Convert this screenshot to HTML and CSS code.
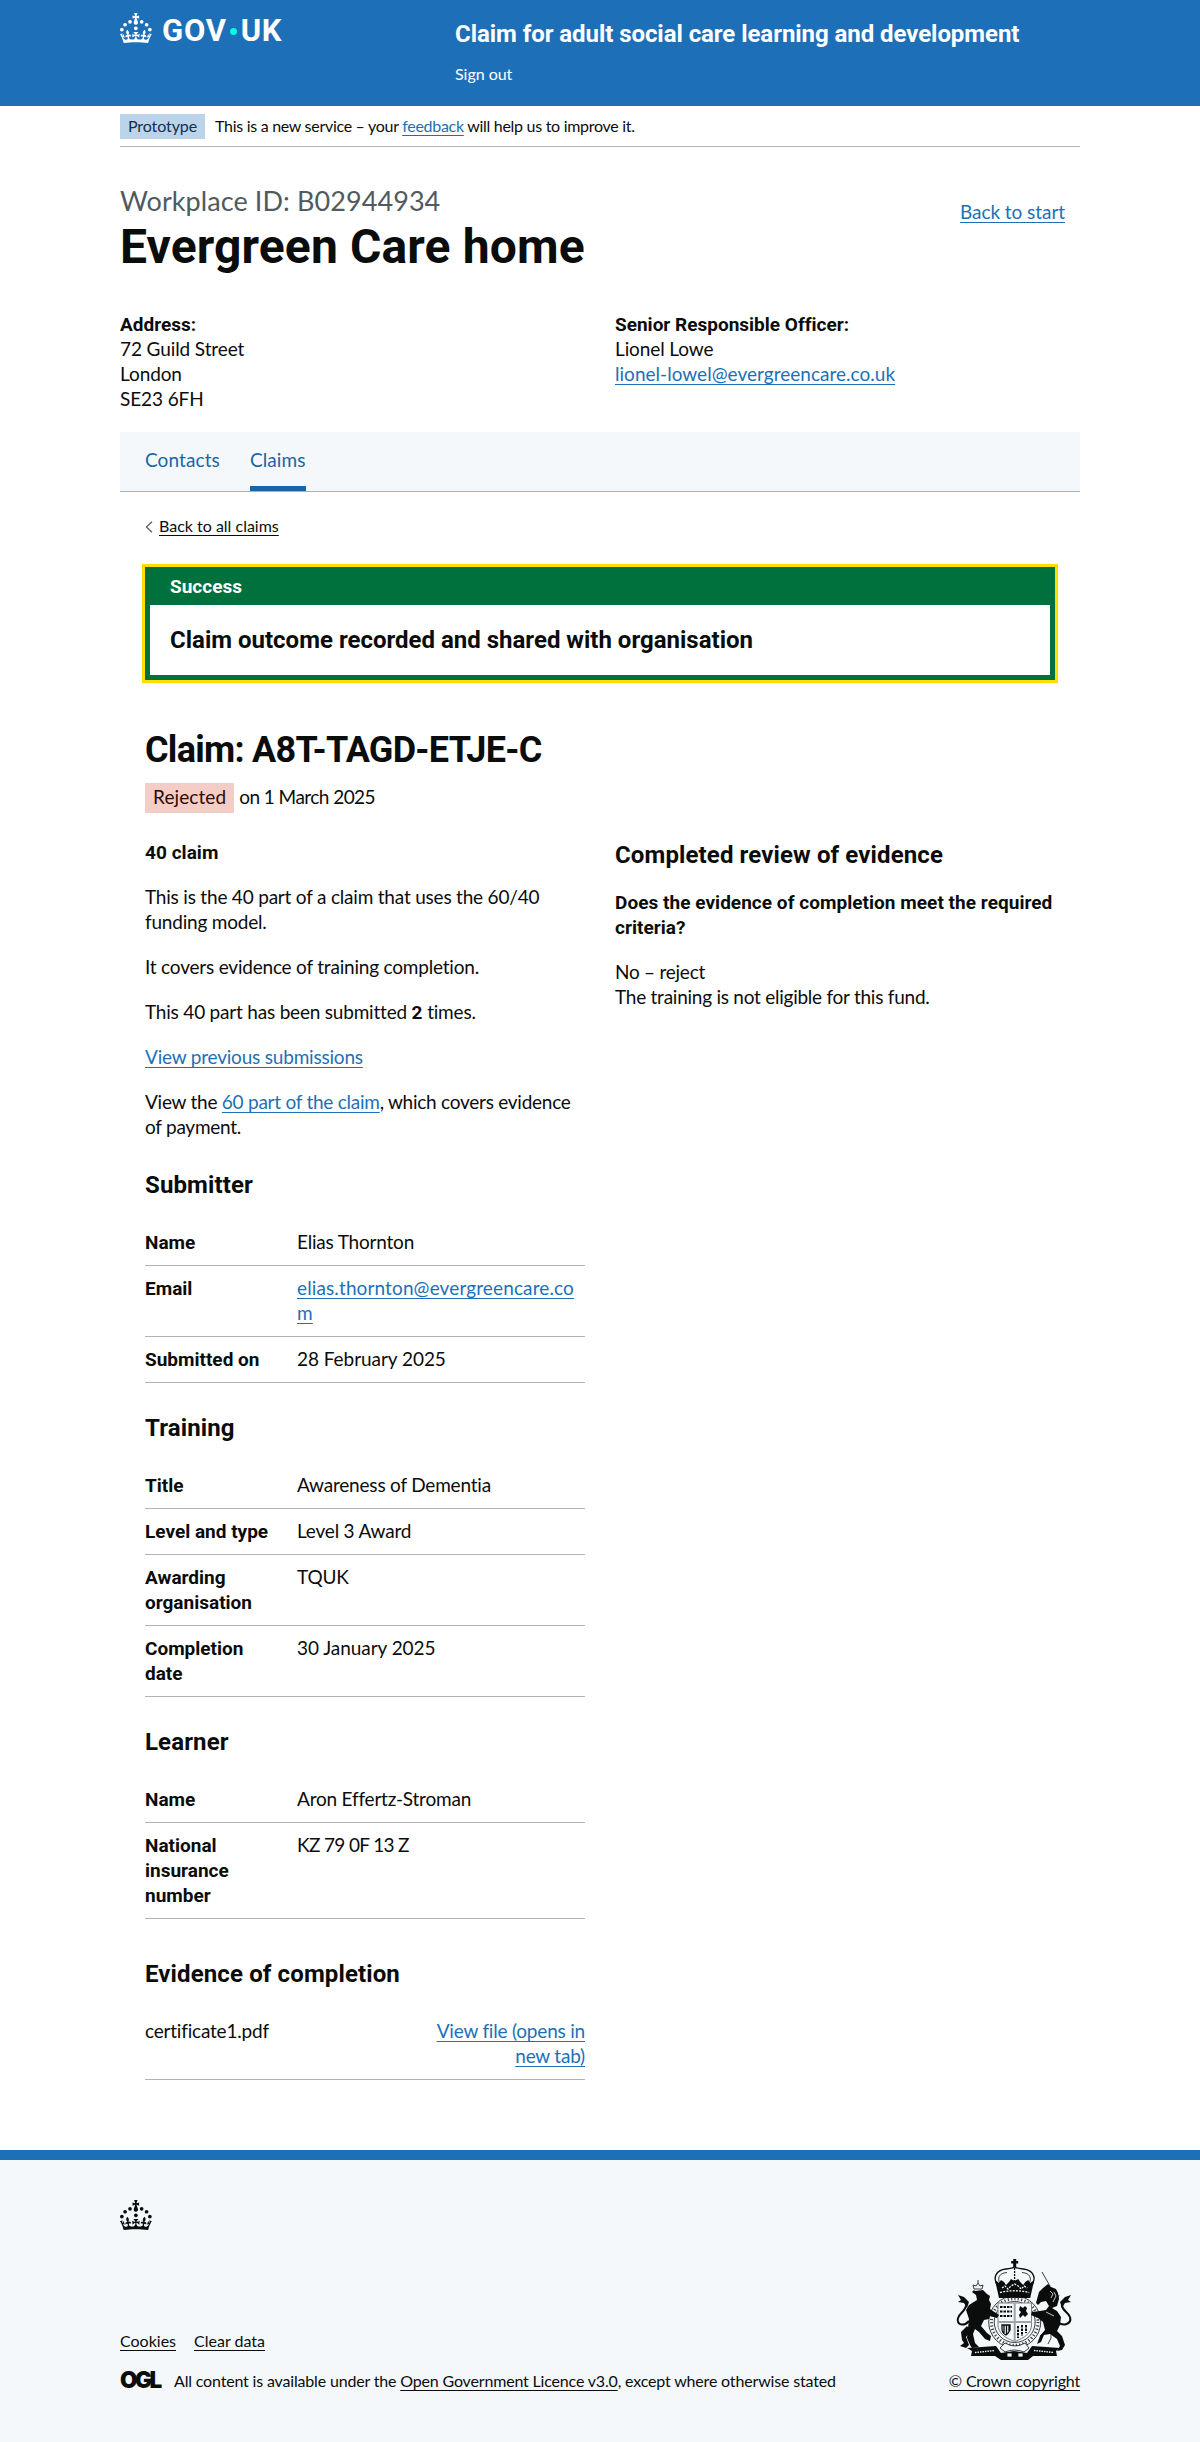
FILE: index.html
```
<!DOCTYPE html>
<html lang="en">
<head>
  <meta charset="utf-8">
  <title>Claim for adult social care learning and development</title>
  <link rel="stylesheet" href="styles.css">
</head>
<body>
  <svg class="sprite" aria-hidden="true">
    <symbol id="crown" viewBox="0 0 64 60">
      <circle cx="20" cy="17.6" r="3.7"/><circle cx="10.2" cy="23.5" r="3.7"/><circle cx="3.7" cy="33.2" r="3.7"/><circle cx="31.7" cy="30.6" r="3.7"/><circle cx="43.3" cy="17.6" r="3.7"/><circle cx="53.2" cy="23.5" r="3.7"/><circle cx="59.7" cy="33.2" r="3.7"/>
      <path d="M33.1,9.8c.2-.1.3-.3.5-.5l4.6,2.4v-6.8l-4.6,1.5c-.1-.2-.3-.3-.5-.5l1.9-5.9h-6.7l1.9,5.9c-.2.1-.3.3-.5.5l-4.6-1.5v6.8l4.6-2.4c.1.2.3.3.5.5l-2.6,8c-.9,2.8,1.2,5.7,4.1,5.7h0c3,0,5.1-2.9,4.1-5.7l-2.6-8ZM37,37.9s-3.4,3.8-4.1,6.1c2.2,0,4.2-.5,6.4-2.8l-.7,8.5c-2-2.8-4.4-4.1-5.7-3.8.1,3.1.5,6.7,5.8,7.2,3.7.3,6.7-1.5,7-3.8.4-2.6-2-4.3-3.7-1.6-1.4-4.5,2.4-6.1,4.9-3.2-1.9-4.5-1.8-7.7,2.4-10.9,3,4,2.6,7.3-1.2,11.1,2.4-1.3,6.2,0,4,4.6-1.2-2.8-3.7-2.2-4.2.2-.3,1.7.7,3.7,3,4.2,1.9.3,4.7-.9,7-5.9-1.3,0-2.4.7-3.9,1.7l2.4-8c.6,2.3,1.4,3.7,2.2,4.5.6-1.6.5-2.8,0-5.3l5,1.8c-2.6,3.6-5.2,8.7-7.3,17.5-7.4-1.1-15.7-1.7-24.5-1.7h0c-8.8,0-17.1.6-24.5,1.7-2.1-8.9-4.7-13.9-7.3-17.5l5-1.8c-.5,2.5-.6,3.7,0,5.3.8-.8,1.6-2.3,2.2-4.5l2.4,8c-1.5-1-2.6-1.7-3.9-1.7,2.3,5,5.2,6.2,7,5.9,2.3-.4,3.3-2.4,3-4.2-.5-2.4-3-3.1-4.2-.2-2.2-4.6,1.6-6,4-4.6-3.7-3.7-4.2-7.1-1.2-11.1,4.2,3.2,4.3,6.4,2.4,10.9,2.5-2.8,6.3-1.3,4.9,3.2-1.8-2.7-4.1-1-3.7,1.6.3,2.3,3.3,4.1,7,3.8,5.4-.5,5.7-4.2,5.8-7.2-1.3-.2-3.7,1-5.7,3.8l-.7-8.5c2.2,2.3,4.2,2.7,6.4,2.8-.7-2.3-4.1-6.1-4.1-6.1h10.6,0Z"/>
    </symbol>
  </svg>

  <header class="header">
    <div class="container header-inner">
      <a class="logo" href="#">
        <svg class="crown"><use href="#crown"/></svg>
        <span class="logo-gov">GOV</span><span class="logo-dot"></span><span class="logo-uk">UK</span>
      </a>
      <div class="header-content">
        <a class="service-name" href="#">Claim for adult social care learning and development</a>
        <a class="sign-out" href="#">Sign out</a>
      </div>
    </div>
  </header>

  <div class="container">
    <div class="phase-banner">
      <strong class="phase-tag">Prototype</strong>
      <span class="phase-text">This is a new service – your <a class="link" href="#">feedback</a> will help us to improve it.</span>
    </div>

    <main class="main">
      <div class="page-head">
        <h1 class="heading-xl"><span class="caption">Workplace ID: B02944934</span>Evergreen Care home</h1>
        <a class="link back-start" href="#">Back to start</a>
      </div>

      <div class="columns details">
        <div><b>Address:</b><br>72 Guild Street<br>London<br>SE23 6FH</div>
        <div><b>Senior Responsible Officer:</b><br>Lionel Lowe<br><a class="link email" href="#">lionel-lowel@evergreencare.co.uk</a></div>
      </div>

      <nav class="subnav">
        <a class="subnav-item" href="#">Contacts</a>
        <a class="subnav-item subnav-current" href="#">Claims</a>
      </nav>

      <div class="content">
        <a class="back-link" href="#"><svg class="chevron" viewBox="0 0 8 12"><path d="M7 .8 1.4 6 7 11.2"/></svg><span class="back-text">Back to all claims</span></a>

        <section class="banner">
          <h2 class="banner-title">Success</h2>
          <p class="banner-body">Claim outcome recorded and shared with organisation</p>
        </section>

        <h2 class="heading-l">Claim: A8T-TAGD-ETJE-C</h2>
        <p class="status"><strong class="status-tag">Rejected</strong> <span class="status-date">on 1 March 2025</span></p>

        <div class="columns">
          <div>
            <h4 class="heading-s">40 claim</h4>
            <p class="body">This is the 40 part of a claim that uses the 60/40 funding model.</p>
            <p class="body">It covers evidence of training completion.</p>
            <p class="body">This 40 part has been submitted <b>2</b> times.</p>
            <p class="body"><a class="link" href="#">View previous submissions</a></p>
            <p class="body body-tight">View the <a class="link" href="#">60 part of the claim</a>, which covers evidence of payment.</p>

            <h3 class="heading-m">Submitter</h3>
            <dl class="summary">
              <div class="row"><dt>Name</dt><dd>Elias Thornton</dd></div>
              <div class="row"><dt>Email</dt><dd><a class="link email email-long" href="#">elias.thornton@evergreencare.com</a></dd></div>
              <div class="row"><dt>Submitted on</dt><dd class="date">28 February 2025</dd></div>
            </dl>

            <h3 class="heading-m">Training</h3>
            <dl class="summary">
              <div class="row"><dt>Title</dt><dd>Awareness of Dementia</dd></div>
              <div class="row"><dt>Level and type</dt><dd>Level 3 Award</dd></div>
              <div class="row"><dt>Awarding organisation</dt><dd>TQUK</dd></div>
              <div class="row"><dt>Completion date</dt><dd class="date">30 January 2025</dd></div>
            </dl>

            <h3 class="heading-m">Learner</h3>
            <dl class="summary">
              <div class="row"><dt>Name</dt><dd>Aron Effertz-Stroman</dd></div>
              <div class="row"><dt>National insurance number</dt><dd class="code">KZ 79 0F 13 Z</dd></div>
            </dl>

            <h3 class="heading-m heading-evidence">Evidence of completion</h3>
            <dl class="summary">
              <div class="row"><dd class="file">certificate1.pdf</dd><dd class="action"><a class="link" href="#">View file (opens in<br>new tab)</a></dd></div>
            </dl>
          </div>
          <div>
            <h3 class="heading-m heading-review">Completed review of evidence</h3>
            <h4 class="heading-s">Does the evidence of completion meet the required criteria?</h4>
            <p class="body body-tight">No – reject<br>The training is not eligible for this fund.</p>
          </div>
        </div>
      </div>
    </main>
  </div>

  <footer class="footer">
    <div class="container">
      <svg class="crown footer-crown"><use href="#crown"/></svg>
      <div class="footer-meta">
        <div>
          <div class="footer-links"><a href="#">Cookies</a><a href="#">Clear data</a></div>
          <div class="licence"><span class="ogl">OGL</span><span>All content is available under the <a href="#">Open Government Licence v3.0</a>, except where otherwise stated</span></div>
        </div>
        <div class="copyright">
          <svg class="arms" viewBox="0 0 117 102">
            <!-- crown -->
            <path d="M57.2 0h3v2h2v2.6h-2V8h-3V4.600h-2V2h2z"/>
            <path class="line" d="M42 27C36 19 40 11 50 10c4-.4 7-1 8.600-2 1.600 1 4.600 1.600 8.600 2 10 1 14 9 8 17" />
            <path class="line thin" d="M44 25c-3-6-1-11 7-11.500M73 25c3-6 1-11-7-11.500"/>
            <path class="line" d="M58.600 9v14" stroke-dasharray="2 1"/>
            <path d="M39 21l4 3 2-3 3 2 2 3 3-3 2-3 3.600 2 3.600-2 2 3 3 3 2-3 3-2 2 3 4-3-4 18H43z"/>
            <path class="pale line" d="M44 33.500q14.600-3.500 29.200 0M46 29l3-2 3 3 3-3 3.600-2 3.600 2 3 3 3-3 3 2" stroke-dasharray="2 1.200"/>
            <!-- garter -->
            <circle class="line thin" cx="58.700" cy="63" r="26"/>
            <circle class="line thin" cx="58.700" cy="63" r="20.500"/>
            <circle class="letters" cx="58.700" cy="63" r="23.300"/>
            <!-- shield -->
            <path class="shield" d="M42 44h33.500v22c0 8-7 13-16.700 16.500C49 79 42 74 42 66z"/>
            <path class="line thick" stroke-dasharray="2.500 1" d="M44 48h12M44 52.500h12M44 57h12M62 67v12M66 66v11M70 66v8"/>
            <path d="M64 47l3 2 2-2 2 2-1 3 2 3-3 3-2-2-3 3-1-3 2-3-2-2z"/>
            <path class="line" d="M46 66h8v5q-2 4-4 5-4-2-4-6zM48 66v8M50.500 66v9M53 66v7"/>
            <path class="grey" d="M58.700 44v38M42 63h33.500"/>
            <!-- lion -->
            <path class="line thin" d="M18 30l-1-4 3 1 2-3 2 3 3-1-1 4zM22 24v-3"/>
            <path d="M19 32l8-1 4 4 3 2-1 4 2 4-1 5 9 6-2 3-7-2-1 3-5 1-3 6 6 7 4 3-1 5-5-2-6-7-4-3-2 5 2 9 4 4-7 1-2-3-3-7 1-10 1-9-3-9 3-5 8-5-1-5-4-3 2-2-2-2z"/>
            <path d="M11 67l-6 6 1 8 2 3-4 3 6 2 3-3-3-8 5-6z"/>
            <path class="line thick" d="M13 62C8 68 0 66 2 59c1-4 7-7 8-12 .500-3-1-5-4-6"/>
            <path d="M2 36l6 2 5 5-2 6-3-5-6-1 3-2z"/>
            <!-- unicorn -->
            <path class="line thin" d="M86 13l8 14"/>
            <path d="M83 33l4-4 5-4 3 3 5 2 2 4 1 6-2 7-5 2 5 3 4 6-1 8-3 6 5 5 3 9-3 5-5 1 3-5-3-7-7-5-6 1-3 7-4 2 3-8 5-6-2-8-5-4-7-3 1-3 8-1 6-1 3-4-3-5-5 1-3 3-2-2z"/>
            <path class="line thin" d="M90 71l-6 6M97 60c4 8-3 12-2 19l-3 6M103 36l-4 10M96 31l3 6" />
            <path class="pale line thin" d="M94 32l3 3-2 4M98 33l2 4-3 6M90 53l8 4"/>
            <path class="line thick" d="M102 63c5 5 14 2 12-5-1-4-7-6-8-11-.500-3 1-5 3-6"/>
            <path d="M115 36l-6 2-5 5 2 6 3-5 6-1-3-2z"/>
            <!-- motto -->
            <path d="M11 89l29-2 5 7 13-2 13 2 5-7 28 2-4 3 1 5-24 0-5 4H45l-6-4H15l1-5z"/>
            <path class="pale line" stroke-dasharray="1.500 1" d="M19 93.500l20-2M78 91.500l20 2"/>
            <path class="shell" d="M49 84q10 6 20 0l4 5-5 4q-10-4-19 0l-5-4zM51 94h5v4h-5zM62 94h5v4h-5z"/>
          </svg>
          <a href="#">© Crown copyright</a>
        </div>
      </div>
    </div>
  </footer>
</body>
</html>
```
FILE: styles.css
```
* { box-sizing: border-box; }

body {
  margin: 0;
  background: #fff;
  color: #0b0c0c;
  font: 19px/25px Lato, "Liberation Sans", sans-serif;
  letter-spacing: -.2px;
  font-variant-ligatures: none;
}

h1, h2, h3, h4, p, dl, dd { margin: 0; }

h1, h2, h3, h4, b, dt, .service-name, .banner-body {
  font-family: Roboto, "Liberation Sans", sans-serif;
  font-weight: 700;
  letter-spacing: 0;
}
b { line-height: 1; }

.sprite { display: none; }

.container { width: 960px; margin: 0 auto; }

a { color: inherit; text-decoration-thickness: 1px; text-underline-offset: 3px; }
.link { color: #1d70b8; }
.email { letter-spacing: .02px; overflow-wrap: anywhere; }
.email-long { letter-spacing: .12px; }

/* Header */
.header { height: 106px; background: #1d70b8; color: #fff; }
.header a { text-decoration: none; }
.header-inner { display: grid; grid-template-columns: 335px 1fr; }
.crown { display: block; width: 32px; height: 30px; fill: currentColor; }

.logo {
  display: flex;
  align-items: center;
  height: 30px;
  margin-top: 13px;
  font: 700 31px/30px Roboto, "Liberation Sans", sans-serif;
}
.logo-gov { margin: 5px 0 0 10px; letter-spacing: .8px; }
.logo-dot { width: 7px; height: 7px; margin: 6px 4px 0 3px; border-radius: 50%; background: #00ffe0; }
.logo-uk { margin-top: 5px; letter-spacing: .5px; }

.header-content { display: flex; flex-direction: column; align-items: flex-start; padding-top: 19px; }
.service-name { font-size: 24px; line-height: 30px; letter-spacing: -.06px; }
.sign-out { margin-top: 15px; font-size: 16px; line-height: 20px; letter-spacing: -.03px; }

/* Phase banner */
.phase-banner {
  display: flex;
  align-items: center;
  gap: 10px;
  height: 41px;
  border-bottom: 1px solid #b1b4b6;
  font-size: 16px;
  line-height: 20px;
}
.phase-tag { padding: 2px 8px 3px; background: #bbd4ea; color: #0e3050; font-weight: 400; letter-spacing: -.1px; }
.phase-text { padding-bottom: 1px; letter-spacing: -.29px; }

/* Page heading */
.main { padding: 39px 0 70px; }
.page-head { display: flex; justify-content: space-between; }
.heading-xl { font-size: 48px; line-height: 50px; letter-spacing: .13px; }
.caption {
  display: block;
  margin-bottom: 6px;
  color: #505a5f;
  font: 400 27px/30px Lato, "Liberation Sans", sans-serif;
  letter-spacing: .08px;
}
.back-start { margin: 13px 15px 0 0; letter-spacing: -.06px; }

.columns { display: grid; grid-template-columns: 440px 440px; gap: 30px; }
.details { grid-template-columns: 465px 465px; padding: 39px 0 21px; letter-spacing: -.1px; }

.subnav {
  display: flex;
  gap: 30px;
  height: 60px;
  padding: 0 25px;
  border-bottom: 1px solid #8eb8dc;
  background: #f4f8fb;
  color: #1a65a6;
  letter-spacing: .1px;
}
.subnav-item { height: 59px; padding-top: 15px; text-decoration: none; }
.subnav-current { border-bottom: 5px solid #1a65a6; }

.content { padding: 0 25px; }

.back-link {
  display: flex;
  align-items: center;
  gap: 6px;
  width: max-content;
  margin-top: 24px;
  font-size: 16px;
  line-height: 20px;
  letter-spacing: 0;
  text-decoration: none;
}
.back-text { text-decoration: underline; text-decoration-thickness: 1px; text-underline-offset: 3px; }
.chevron { width: 8px; height: 12px; margin-top: 2px; fill: none; stroke: #505a5f; stroke-width: 1.2; }

/* Success banner */
.banner {
  margin-top: 31px;
  border: 5px solid #00703c;
  background: #00703c;
  outline: 3px solid #fd0;
}
.banner-title { padding: 2px 20px 6px; color: #fff; font-size: 19px; line-height: 25px; }
.banner-body { padding: 20px; background: #fff; font-size: 24px; line-height: 30px; }

/* Claim */
.heading-l { margin-top: 50px; font-size: 36px; line-height: 40px; letter-spacing: -.72px; }
.status { display: flex; align-items: center; gap: 5px; height: 30px; margin: 13px 0 27px; }
.status-tag { padding: 1px 8px 4px; background: #f4cdc6; color: #2a0b06; font-weight: 400; letter-spacing: .1px; }
.status-date { padding-bottom: 3px; letter-spacing: -.55px; }

.heading-s { margin-bottom: 20px; font-size: 19px; line-height: 25px; letter-spacing: .04px; }
.heading-m { margin: 30px 0 20px; font-size: 24px; line-height: 30px; letter-spacing: .12px; }
.heading-review { margin-top: 0; }
.heading-evidence { margin-top: 40px; }
.body { margin: -1px 0 21px; }
.body-tight { letter-spacing: -.25px; }
.body + .heading-m { margin-top: 31px; }

.row {
  display: flex;
  padding: 10px 0;
  border-bottom: 1px solid #b1b4b6;
}
.row dt { flex: 0 0 152px; padding-right: 20px; }
.row dd { flex: 1; min-width: 0; margin: -1px 0 1px; }
.row .date { letter-spacing: -.05px; }
.row .code { letter-spacing: -.65px; }
.row .action { flex: 0 0 220px; text-align: right; }

/* Footer */
.footer {
  height: 292px;
  padding-top: 40px;
  border-top: 10px solid #1d70b8;
  background: #f4f8fb;
  font-size: 16px;
  line-height: 20px;
}
.footer-meta { display: flex; justify-content: space-between; align-items: flex-end; margin-top: 30px; height: 131px; }
.footer-links { display: flex; gap: 18px; margin-bottom: 20px; letter-spacing: 0; }
.licence { display: flex; gap: 13px; letter-spacing: -.17px; }
.ogl { width: 41px; font: 900 22.5px/18px Inter, sans-serif; letter-spacing: -2.4px; }
.copyright { display: flex; flex-direction: column; align-items: center; gap: 10px; letter-spacing: -.18px; }
.arms { display: block; width: 117px; height: 102px; fill: #0b0c0c; }
.arms .line { fill: none; stroke: #0b0c0c; stroke-width: 1.3; }
.arms .thin { stroke-width: .8; }
.arms .thick { stroke-width: 2; }
.arms .pale { stroke: #f4f8fb; }
.arms .letters { fill: none; stroke: #3c4042; stroke-width: 3; stroke-dasharray: 1.2 2.2; }
.arms .shield { fill: #f4f8fb; stroke: #7c8083; stroke-width: 1; }
.arms .grey { fill: none; stroke: #a0a4a7; stroke-width: 2; }
.arms .shell { fill: #f4f8fb; stroke: #0b0c0c; stroke-width: .8; }
```
